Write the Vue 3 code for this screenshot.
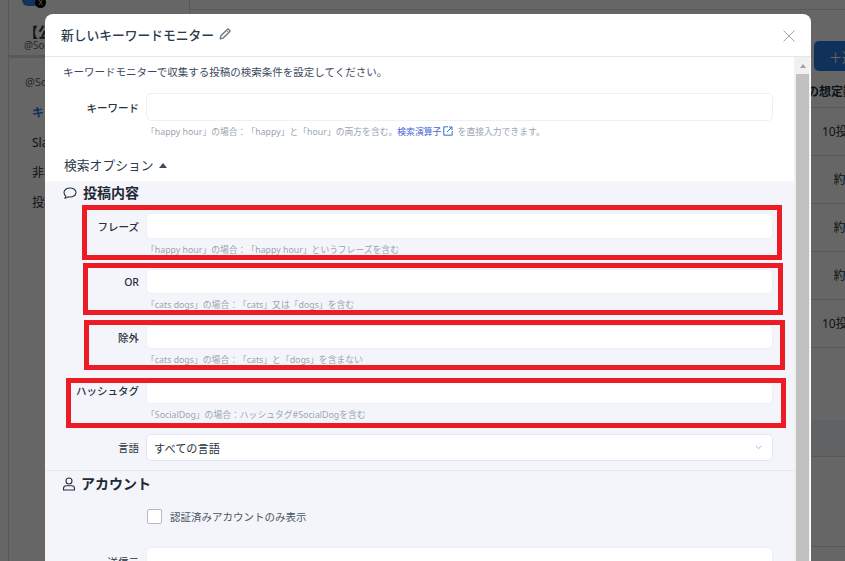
<script setup>
import { ref } from "vue";

const sideItems = [
  { label: "キーワード", active: true },
  { label: "Slack" },
  { label: "非表示" },
  { label: "投稿" },
];
const rows = ["10投稿/日", "約6分", "約6分", "約5分", "10投稿/日"];

const fields = ref([
  { key: "phrase", label: "フレーズ", hint: "「happy hour」の場合：「happy hour」というフレーズを含む", value: "" },
  { key: "or", label: "OR", hint: "「cats dogs」の場合：「cats」又は「dogs」を含む", value: "" },
  { key: "exclude", label: "除外", hint: "「cats dogs」の場合：「cats」と「dogs」を含まない", value: "" },
  { key: "hashtag", label: "ハッシュタグ", hint: "「SocialDog」の場合：ハッシュタグ#SocialDogを含む", value: "" },
]);

const keyword = ref("");
const verified = ref(false);
const sender = ref("");
</script>

<template>
  <div class="page">
    <aside class="side">
      <div class="profile">
        <div class="avatar"><span class="badge">X</span></div>
        <div class="profile-name">【公式】SocialDog</div>
        <div class="profile-id">@SocialDog</div>
      </div>
      <div class="side-id">@SocialDog</div>
      <ul class="side-menu">
        <li v-for="item in sideItems" :key="item.label" :class="{ active: item.active }">{{ item.label }}</li>
      </ul>
    </aside>

    <main class="main">
      <div class="main-top"></div>
      <div class="main-bar"><button class="add-btn">＋追加</button></div>
      <div class="table-head">投稿の想定数</div>
      <div v-for="(r, i) in rows" :key="i" class="table-row"><span>{{ r }}</span></div>
      <div class="table-band"></div>
      <div class="table-foot"></div>
    </main>

    <div class="overlay">
      <div class="modal">
        <header class="modal-head">
          <h2>新しいキーワードモニター</h2>
          <svg class="pencil" width="12" height="12" viewBox="0 0 12 12">
            <path d="M1.200 10.800l.7-3L8.300 1.400a1 1 0 0 1 1.400 0l.9.9a1 1 0 0 1 0 1.400L4.200 10.100z" fill="none" stroke="#6b7a8c" stroke-width="1.400" stroke-linejoin="round" />
            <path d="M7.400 2.300l2.300 2.300" stroke="#6b7a8c" stroke-width="1" />
          </svg>
          <button class="close" aria-label="閉じる">
            <svg width="12" height="12" viewBox="0 0 12 12">
              <path d="M.5.5l11 11M11.500.5l-11 11" stroke="#9aa6b2" stroke-width="1" fill="none" />
            </svg>
          </button>
        </header>

        <div class="modal-wrap">
          <div class="modal-body">
            <section class="top">
              <p class="lead">キーワードモニターで収集する投稿の検索条件を設定してください。</p>
              <div class="field keyword">
                <label>キーワード</label>
                <input v-model="keyword" class="input" type="text" />
                <p class="hint">
                  「happy hour」の場合：「happy」と「hour」の両方を含む。<a class="link">検索演算子</a>
                  <svg class="ext" width="10" height="10" viewBox="0 0 10 10">
                    <path d="M5 .8H.8v8.400h8.400V5" fill="none" stroke="#2f6fd8" stroke-width="1" />
                    <path d="M4 6l4.600-4.600M6 1h3v3" fill="none" stroke="#2f6fd8" stroke-width="1" />
                  </svg>
                  を直接入力できます。
                </p>
              </div>
              <div class="options">検索オプション <span class="tri"></span></div>
            </section>

            <section class="opts">
              <h3 class="sec-title first">
                <svg width="14" height="13" viewBox="0 0 14 13">
                  <path d="M7 1c3.300 0 6 1.900 6 4.500S10.300 10 7 10c-.7 0-1.300-.1-1.900-.2-.9.8-2 1.300-3.300 1.400.6-.6 1-1.300 1.100-2.100C1.800 8.300 1 7 1 5.500 1 2.900 3.700 1 7 1z" fill="none" stroke="#27313d" stroke-width="1.100" stroke-linejoin="round" />
                </svg>
                投稿内容
              </h3>

              <div v-for="f in fields" :key="f.key" class="field" :class="f.key">
                <label>{{ f.label }}</label>
                <input v-model="f.value" class="input" type="text" />
                <p class="hint">{{ f.hint }}</p>
              </div>

              <div class="field lang">
                <label class="plain">言語</label>
                <div class="select">
                  <span>すべての言語</span>
                  <svg width="7" height="5" viewBox="0 0 7 5">
                    <path d="M.8 1l2.700 2.700L6.200 1" fill="none" stroke="#a9bcd0" stroke-width="1" />
                  </svg>
                </div>
              </div>

              <hr class="divider" />

              <h3 class="sec-title account">
                <svg width="14" height="14" viewBox="0 0 14 14">
                  <circle cx="7" cy="4" r="3" fill="none" stroke="#27313d" stroke-width="1.100" />
                  <path d="M1.500 13v-1.500c0-1.600 1.200-2.800 2.800-2.800h5.400c1.600 0 2.800 1.200 2.800 2.800V13z" fill="none" stroke="#27313d" stroke-width="1.100" stroke-linejoin="round" />
                </svg>
                アカウント
              </h3>

              <label class="check">
                <input v-model="verified" type="checkbox" />
                <span>認証済みアカウントのみ表示</span>
              </label>

              <div class="field sender">
                <label class="plain">送信元</label>
                <input v-model="sender" class="input" type="text" />
              </div>
            </section>
          </div>

          <div class="scrollbar">
            <span class="arrow"></span>
            <div class="thumb"></div>
          </div>
        </div>
      </div>

      <!-- 赤枠の注釈 -->
      <div class="mark mark-1"></div>
      <div class="mark mark-2"></div>
      <div class="mark mark-3"></div>
      <div class="mark mark-4"></div>
    </div>
  </div>
</template>

<style>
html,
body {
  margin: 0;
  overflow: hidden;
}
</style>

<style scoped>
.page {
  position: relative;
  width: 845px;
  height: 561px;
  display: flex;
  overflow: hidden;
  background: #fff;
  color: #27313d;
  font-family: "Noto Sans", "Noto Sans CJK JP", sans-serif;
  text-spacing-trim: space-all;
}

/* 背景 */
.side {
  width: 180px;
  margin-left: 8px;
  flex: none;
  border-left: 1px solid #ddd;
  border-right: 1px solid #ddd;
}

.profile {
  height: 55px;
  border-bottom: 3px solid #d8dde3;
  padding-left: 13px;
}

.avatar {
  width: 18px;
  height: 6px;
  background: #2f80e0;
  border-radius: 0 0 8px 8px;
  position: relative;
}

.badge {
  position: absolute;
  right: -6px;
  top: -3px;
  width: 11px;
  height: 11px;
  border-radius: 50%;
  background: #000;
  color: #fff;
  font-size: 7px;
  line-height: 11px;
  text-align: center;
}

.profile-name {
  margin-top: 18px;
  padding-left: 2px;
  font-size: 14px;
  font-weight: 700;
  line-height: 16px;
  white-space: nowrap;
}

.profile-id {
  padding-left: 2px;
  font-size: 10px;
  line-height: 10px;
  color: #666;
}

.side-id {
  padding: 16px 0 0 16px;
  font-size: 11px;
  line-height: 16px;
  color: #666;
}

.side-menu {
  list-style: none;
  margin: 8px 0 0;
  padding: 0 0 0 23px;
  font-size: 12px;
}

.side-menu li {
  height: 30px;
  line-height: 30px;
}

.side-menu .active {
  color: #2a7de1;
  font-weight: 700;
}

.main {
  flex: 1;
  min-width: 0;
}

.main-top {
  height: 9px;
  border-bottom: 1px solid #ddd;
}

.main-bar {
  height: 30px;
  padding-top: 31px;
  display: flex;
  justify-content: flex-end;
}

.add-btn {
  width: 100px;
  height: 30px;
  margin-right: -69px;
  border: none;
  border-radius: 5px;
  background: #2a7de1;
  color: #fff;
  font: inherit;
  font-size: 13px;
  text-align: left;
  padding-left: 15px;
}

.table-head {
  height: 27px;
  padding-top: 9px;
  border-bottom: 1px solid #ddd;
  text-align: right;
  font-size: 12px;
  font-weight: 700;
  line-height: 24px;
  white-space: nowrap;
  margin-right: -10px;
}

.table-row {
  height: 48px;
  box-sizing: border-box;
  border-bottom: 1px solid #ddd;
  font-size: 12px;
  line-height: 47px;
  padding-left: 611px;
  white-space: nowrap;
}

.table-row span {
  display: inline-block;
  width: 96px;
  text-align: center;
}

.table-band {
  height: 36px;
  margin-top: 72px;
  background: #f3f5fa;
  border-bottom: 1px solid #ddd;
}

.table-foot {
  height: 89px;
  border-bottom: 1px solid #ddd;
}

/* モーダル */
.overlay {
  position: absolute;
  inset: 0;
  background: rgba(0, 0, 0, 0.6);
  padding: 14px 0 0 45px;
  box-sizing: border-box;
  overflow: hidden;
}

.modal {
  width: 766px;
  height: 560px;
  background: #fff;
  border-radius: 8px 8px 0 0;
  display: flex;
  flex-direction: column;
}

.modal-head {
  height: 40px;
  padding: 0 16px 2px;
  flex: none;
  border-bottom: 1px solid #e4e7f2;
  display: flex;
  align-items: center;
  gap: 5px;
}

.modal-head h2 {
  margin: 0;
  font-size: 12.750px;
  font-weight: 500;
  color: #2d3b4c;
}

.close {
  margin: 3px 0 0 auto;
  background: none;
  border: none;
  padding: 0;
  display: flex;
  cursor: pointer;
}

.modal-wrap {
  flex: 1;
  min-height: 0;
  display: flex;
}

.modal-body {
  width: 749px;
  flex: none;
}

.top {
  height: 124px;
  padding-top: 7px;
  box-sizing: border-box;
}

.lead {
  margin: 0 0 13px 18px;
  font-size: 10.500px;
  line-height: 16px;
  color: #3d4a59;
}

.field {
  display: grid;
  grid-template-columns: 94px 627px;
  column-gap: 7px;
}

.field label {
  grid-column: 1;
  text-align: right;
  font-size: 10.500px;
  font-weight: 500;
  color: #27313d;
  white-space: nowrap;
  align-self: center;
}

.field label.plain {
  font-weight: 400;
}

.hashtag label {
  margin-top: -6px;
}

.input,
.select {
  grid-column: 2;
  box-sizing: border-box;
  background: #fff;
  border: 1px solid #eef0f7;
  border-radius: 5px;
  outline: none;
  width: 100%;
  padding: 0 8px;
  font: inherit;
}

.keyword .input {
  height: 28px;
}

.hint {
  grid-column: 2;
  margin: 5px 0 -1px;
  font-size: 8.800px;
  line-height: 13px;
  color: #9ba5b0;
  white-space: nowrap;
}

.keyword .hint {
  margin: 5px 0 -2px;
}

.link {
  color: #4a63d8;
}

.ext {
  vertical-align: -1px;
  margin: 0 2px;
}

.options {
  margin: 19px 0 0 19px;
  font-size: 12.800px;
  line-height: 18px;
  color: #2d3b4c;
  display: flex;
  align-items: center;
  gap: 5px;
}

.tri {
  width: 0;
  height: 0;
  border-left: 4px solid transparent;
  border-right: 4px solid transparent;
  border-bottom: 5px solid #3d4a59;
}

.opts {
  height: 400px;
  background: #f3f5fa;
  padding-top: 3px;
  box-sizing: border-box;
}

.sec-title {
  margin: 0 0 0 18px;
  display: flex;
  align-items: center;
  gap: 6px;
  font-size: 14px;
  line-height: 18px;
  font-weight: 700;
  color: #1f2833;
}

.phrase {
  margin-top: 11px;
}

.phrase .input {
  height: 26px;
}

.or {
  margin-top: 13px;
}

.or .input {
  height: 25px;
}

.exclude {
  margin-top: 14px;
}

.exclude .input {
  height: 24px;
}

.hashtag {
  margin-top: 16px;
}

.hashtag .input {
  height: 22px;
}

.lang {
  margin-top: 13px;
}

.select {
  height: 27px;
  border: 1px solid #e4e7f2;
  display: flex;
  align-items: center;
  justify-content: space-between;
  font-size: 11.200px;
  color: #27313d;
  padding: 0 10px 0 7px;
}

.divider {
  border: none;
  border-top: 1px solid #e4e7f2;
  margin: 9px 0 0;
}

.sec-title.account {
  margin: 4px 0 0 17px;
  gap: 5px;
}

.check {
  display: flex;
  align-items: center;
  gap: 8px;
  margin: 16px 0 0 102px;
  font-size: 10.500px;
  color: #4a5664;
}

.check input {
  appearance: none;
  width: 15px;
  height: 15px;
  margin: 0;
  background: #fff;
  border: 1px solid #b5bbc4;
  border-radius: 2px;
}

.sender {
  margin-top: 23px;
}

.sender .input {
  height: 28px;
}

.scrollbar {
  flex: 1;
  background: #f1f1f1;
  margin-right: 1px;
  display: flex;
  flex-direction: column;
  align-items: stretch;
  padding: 0 1px 0 2px;
}

.arrow {
  align-self: center;
  margin-top: 7px;
  width: 0;
  height: 0;
  border-left: 3.500px solid transparent;
  border-right: 3.500px solid transparent;
  border-bottom: 4px solid #a3a3a3;
}

.thumb {
  margin-top: 6px;
  flex: 1;
  background: #c1c1c1;
}

/* 赤枠 */
.mark {
  position: absolute;
  border: 5px solid #ed1c24;
  box-sizing: border-box;
  pointer-events: none;
}

.mark-1 {
  left: 82px;
  top: 205px;
  width: 700px;
  height: 55px;
}

.mark-2 {
  left: 83px;
  top: 263px;
  width: 700px;
  height: 52px;
}

.mark-3 {
  left: 84px;
  top: 320px;
  width: 701px;
  height: 50px;
}

.mark-4 {
  left: 66px;
  top: 378px;
  width: 720px;
  height: 50px;
}
</style>
